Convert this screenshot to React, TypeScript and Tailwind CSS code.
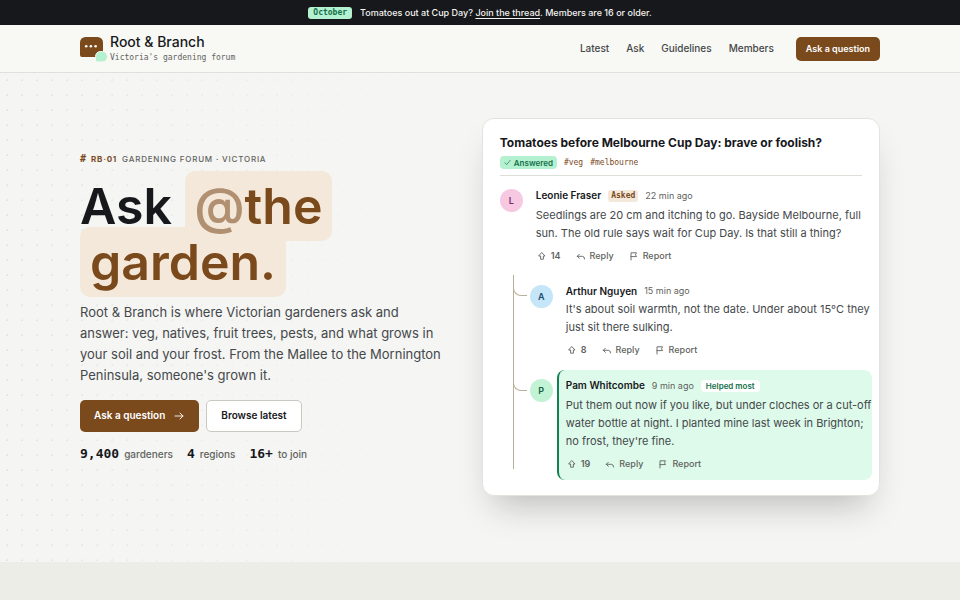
import React from "react";

const navLinks = ["Latest", "Ask", "Guidelines", "Members"];

const stats = [
  { value: "9,400", label: "gardeners" },
  { value: "4", label: "regions" },
  { value: "16+", label: "to join" },
];

const Logo = () => (
  <svg className="w-7 h-7 shrink-0" viewBox="0 0 28 28" aria-hidden="true">
    <path d="M5.500 2h12a5.500 5.500 0 0 1 5.500 5.500V22H2a2 2 0 0 1-2-2V7.500A5.500 5.500 0 0 1 5.500 2z" fill="#7a4a1c" />
    <circle cx="6.200" cy="11.200" r="1.300" fill="#fff" />
    <circle cx="10.900" cy="11.200" r="1.300" fill="#fff" />
    <circle cx="15.600" cy="11.200" r="1.300" fill="#fff" />
    <path d="M20.500 16.500h2a4.800 4.800 0 0 1 4.800 4.800v.9a4.800 4.800 0 0 1-4.800 4.800H17.500a2 2 0 0 1-2-2V21.500a5 5 0 0 1 5-5z" fill="#b4f1d1" stroke="#f8f8f4" strokeWidth="1" />
  </svg>
);

const iconProps = {
  viewBox: "0 0 12 12",
  fill: "none",
  stroke: "currentColor",
  strokeWidth: 0.9,
  strokeLinecap: "round",
  strokeLinejoin: "round",
  "aria-hidden": true,
} as const;

const UpIcon = () => (
  <svg {...iconProps} className="w-3 h-3">
    <path d="M6 2.800 9 6H7.400V9.200H4.600V6H3z" />
  </svg>
);

const ReplyIcon = () => (
  <svg {...iconProps} className="w-3 h-3">
    <path d="M4.300 4.300 2.300 6.300l2 2M2.300 6.300h5Q9.600 6.300 9.600 9" />
  </svg>
);

const FlagIcon = () => (
  <svg {...iconProps} className="w-3 h-3">
    <path d="M3 10V2.800h5.500L7.500 4.700l1 1.900H3" />
  </svg>
);

interface ActionsProps {
  votes: number;
}

const Actions = ({ votes }: ActionsProps) => (
  <div className="flex items-center gap-[14px] h-4 mt-1.5 text-[9px] font-medium text-[#5f6360]">
    <button className="flex items-center gap-[3px] font-semibold">
      <UpIcon />
      {votes}
    </button>
    <button className="flex items-center gap-[3px]">
      <ReplyIcon />
      Reply
    </button>
    <button className="flex items-center gap-[3px]">
      <FlagIcon />
      Report
    </button>
  </div>
);

interface AvatarProps {
  letter: string;
  className: string;
}

const Avatar = ({ letter, className }: AvatarProps) => (
  <div className={`w-[23px] h-[23px] shrink-0 rounded-full flex items-center justify-center text-[9px] font-semibold ${className}`}>
    {letter}
  </div>
);

const ThreadCard = () => (
  <article className="bg-white rounded-xl border border-[#e3e3de] px-[17px] py-[15px] shadow-[0_20px_32px_-12px_rgba(23,24,28,0.26)]">
    <h2 className="text-[12px] leading-[18px] font-bold text-[#17181c]">
      Tomatoes before Melbourne Cup Day: brave or foolish?
    </h2>
    <div className="flex items-center gap-[7px] mt-1 pb-[6px] border-b border-[#dfdfda] font-['DejaVu_Sans_Mono',monospace] text-[8px] text-[#7a4a1c]">
      <span className="h-[13px] px-1 rounded-[4px] bg-[#b4f1d1] text-[#12704a] font-['Inter',sans-serif] font-semibold flex items-center gap-[3px]">
        <svg {...iconProps} className="w-[7px] h-[7px]" strokeWidth={1.2}>
          <path d="m1.500 6.500 3 3 6-7" />
        </svg>
        Answered
      </span>
      <a href="#veg">#veg</a>
      <a href="#melbourne">#melbourne</a>
    </div>

    <div className="flex gap-[13px] mt-[11px]">
      <div className="pt-0.5">
        <Avatar letter="L" className="bg-[#f6c8e2] text-[#7c2f5c]" />
      </div>
      <div className="flex-1">
        <div className="flex items-center gap-[7px] h-[17px]">
          <span className="text-[10px] font-semibold text-[#17181c]">Leonie Fraser</span>
          <span className="px-[3px] h-3 flex items-center rounded-[3px] bg-[#f4e8da] text-[#7a4a1c] font-['DejaVu_Sans_Mono',monospace] font-bold text-[8px]">
            Asked
          </span>
          <span className="text-[9px] text-[#5f6360]">22 min ago</span>
        </div>
        <p className="mt-0.5 text-[11px] leading-[18px]">
          Seedlings are 20 cm and itching to go. Bayside Melbourne, full sun. The old rule says wait for Cup Day. Is that still a thing?
        </p>
        <Actions votes={14} />
      </div>
    </div>

    {/* Replies */}
    <div className="relative ml-[13px] -mr-[10px] mt-[11px] pt-[7px] flex flex-col gap-3 before:absolute before:left-0 before:top-0 before:bottom-[11px] before:w-px before:bg-[#b9b09c]">
      <div className="relative flex gap-1 pl-[17px] pt-0.5">
        <div className="pt-px">
          <Avatar letter="A" className="bg-[#c5e5f8] text-[#1d4d6b]" />
        </div>
        {/* Curved branch from the thread line to the avatar */}
        <span className="absolute left-0 top-[5px] w-[14px] h-[9px] border-l border-b border-[#b9b09c] rounded-bl-lg" />
        <div className="flex-1 pl-[9px]">
          <div className="flex items-center gap-[7px] h-[14px]">
            <span className="text-[10px] font-semibold text-[#17181c]">Arthur Nguyen</span>
            <span className="text-[9px] text-[#5f6360]">15 min ago</span>
          </div>
          <p className="mt-0.5 text-[11px] leading-[18px]">
            It's about soil warmth, not the date. Under about 15°C they just sit there sulking.
          </p>
          <Actions votes={8} />
        </div>
      </div>

      <div className="relative flex gap-1 pl-[17px]">
        <div className="pt-[9px]">
          <Avatar letter="P" className="bg-[#c3f3d5] text-[#14653f]" />
        </div>
        <span className="absolute left-0 top-3 w-[14px] h-[9px] border-l border-b border-[#b9b09c] rounded-bl-lg" />
        <div className="flex-1 rounded-lg border-l-2 border-[#12804f] bg-[#defaeb] pl-[7px] pt-[7px] pb-2">
          <div className="flex items-center gap-[7px] h-[17px]">
            <span className="text-[10px] font-semibold text-[#17181c]">Pam Whitcombe</span>
            <span className="text-[9px] text-[#5f6360]">9 min ago</span>
            <span className="px-[5px] h-3 flex items-center rounded-[4px] bg-white text-[#12704a] text-[8px] font-semibold">
              Helped most
            </span>
          </div>
          <p className="mt-0.5 text-[11px] leading-[18px]">
            Put them out now if you like, but under cloches or a cut-off water bottle at night. I planted mine last week in Brighton; no frost, they're fine.
          </p>
          <Actions votes={19} />
        </div>
      </div>
    </div>
  </article>
);

const App = () => {
  return (
    <div className="min-h-screen bg-[#ecede6] font-['Inter',sans-serif] text-[#44484a]">
      {/* Announcement */}
      <div className="bg-[#17181c] text-[#f2f2ee] h-[25px] flex items-center justify-center gap-2 text-[9px] font-medium">
        <span className="h-3 px-[5px] rounded-[3px] bg-[#b4f1d1] text-[#12704a] flex items-center font-['DejaVu_Sans_Mono',monospace] font-bold text-[8px]">
          October
        </span>
        <p>
          Tomatoes out at Cup Day?{" "}
          <a href="#thread" className="underline underline-offset-2">Join the thread</a>. Members are 16 or older.
        </p>
      </div>

      <header className="bg-[#f8f8f4] border-b border-[#e1e1dc] px-20 h-12 flex items-center justify-between">
        <a href="#home" className="flex items-center gap-0.5">
          <Logo />
          <span>
            <span className="block text-[14px] leading-[18px] font-medium text-[#17181c]">Root &amp; Branch</span>
            <span className="block font-['DejaVu_Sans_Mono',monospace] text-[8px] leading-[14px] text-[#5f6360]">
              Victoria's gardening forum
            </span>
          </span>
        </a>
        <nav className="flex items-center gap-[17px] text-[10px] font-medium">
          {navLinks.map((link) => (
            <a key={link} href={`#${link.toLowerCase()}`}>{link}</a>
          ))}
          <button className="ml-[5px] h-6 px-[10px] rounded-[5px] bg-[#7a4a1c] text-white text-[9px] font-semibold">Ask a question</button>
        </nav>
      </header>

      <main className="relative bg-[#f5f5f3] px-20 pt-[45px] pb-[66px]">
        {/* Dot grid, fading out to the right */}
        <div className="absolute inset-0 bg-[radial-gradient(circle,#e4e4e0_1px,transparent_1px)] bg-[size:15px_15px] [mask-image:linear-gradient(to_right,black,transparent_45%)]" />

        <div className="relative grid grid-cols-[13fr_14fr] gap-8 items-center">
          <section>
            <p className="flex items-center gap-[5px] text-[8px] leading-[14px] font-medium tracking-widest uppercase text-[#5f6360]">
              <span className="font-['DejaVu_Sans_Mono',monospace] font-bold text-[10px] tracking-normal text-[#7a4a1c]">#</span>
              <span className="font-bold text-[#7a4a1c]">RB·01</span>
              Gardening forum · Victoria
            </p>
            <h1 className="mt-3 text-[50px] leading-[56px] font-semibold text-[#17181c]">
              Ask{" "}
              <span className="box-decoration-clone rounded-[10px] bg-[#f4e8da] px-[10px] py-[5px] text-[#7a4a1c]">
                <span className="opacity-55">@</span>the garden.
              </span>
            </h1>
            <p className="mt-3 text-[13px] leading-[21px]">
              Root &amp; Branch is where Victorian gardeners ask and answer: veg, natives, fruit trees, pests, and what grows in your soil and your frost. From the Mallee to the Mornington Peninsula, someone's grown it.
            </p>
            <div className="flex gap-[7px] mt-[14px] text-[10px] font-semibold">
              <button className="h-8 px-[14px] rounded-[5px] bg-[#7a4a1c] text-white flex items-center gap-2">
                Ask a question
                <svg {...iconProps} className="w-3 h-3">
                  <path d="M2 6h8M7 3l3 3-3 3" />
                </svg>
              </button>
              <button className="h-8 px-[14px] rounded-[5px] border border-[#c9c9c4] bg-white text-[#17181c]">Browse latest</button>
            </div>
            <div className="flex gap-[14px] mt-[13px]">
              {stats.map((s) => (
                <p key={s.label} className="flex items-baseline gap-[5px] text-[10px] leading-[18px] font-medium text-[#5f6360]">
                  <strong className="font-['DejaVu_Sans_Mono',monospace] text-[13px] font-bold text-[#17181c]">{s.value}</strong>
                  {s.label}
                </p>
              ))}
            </div>
          </section>

          <ThreadCard />
        </div>
      </main>
    </div>
  );
};

export default App;
